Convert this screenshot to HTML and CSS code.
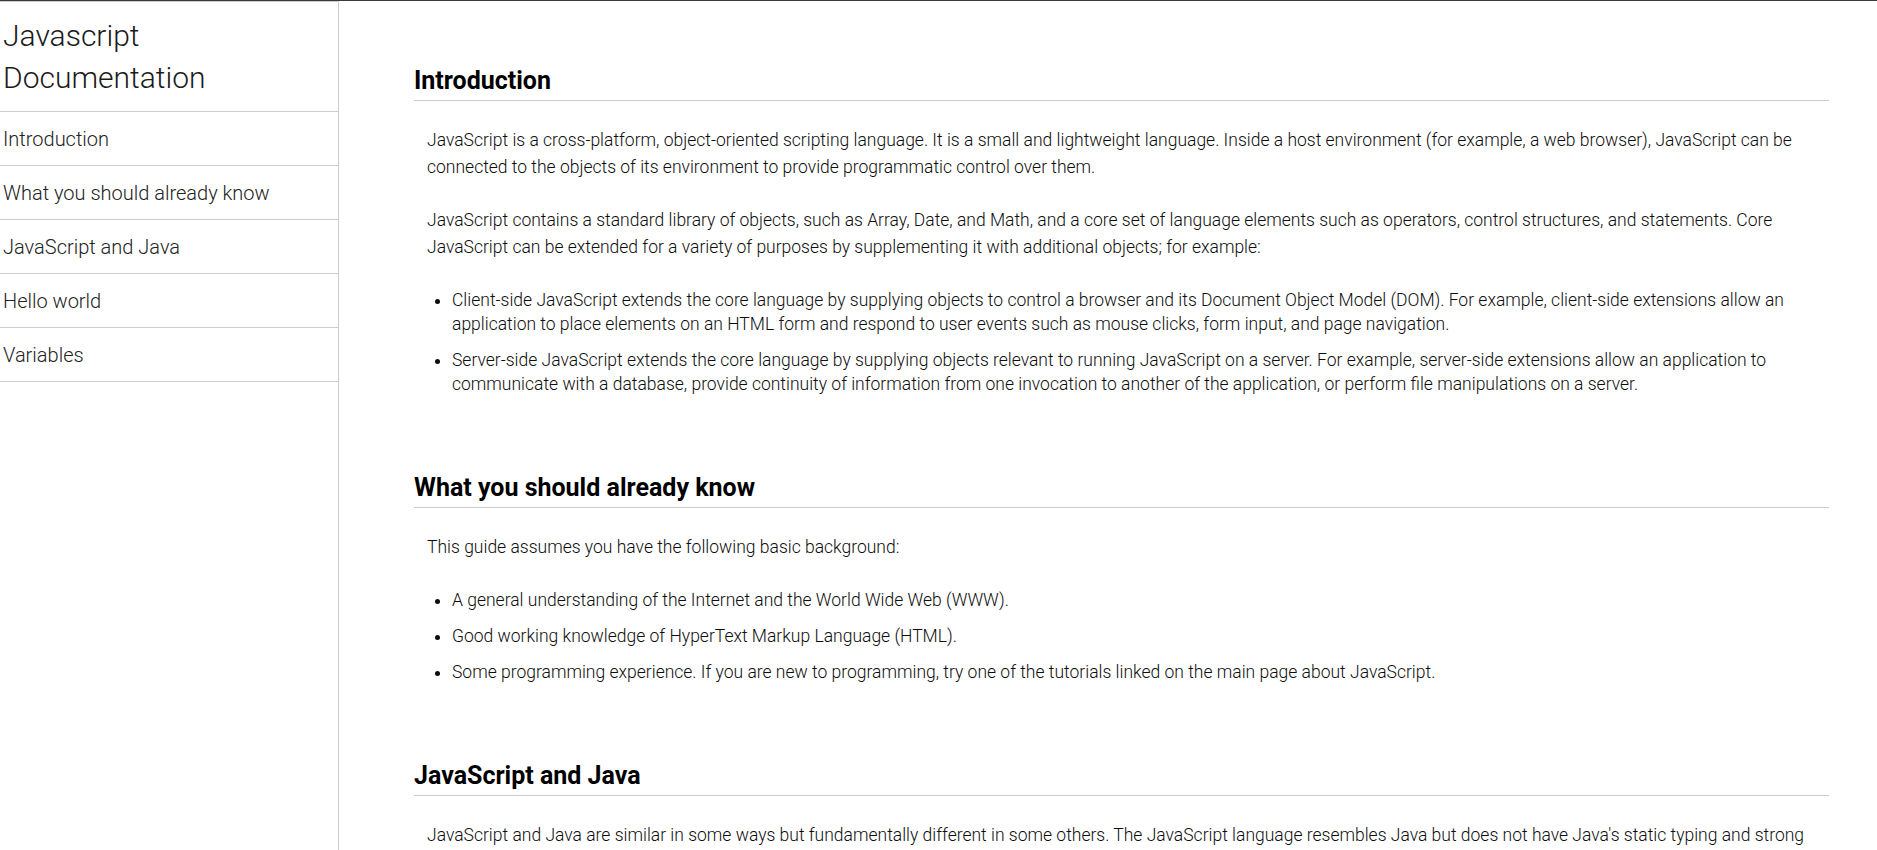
FILE: index.html
```html
<!DOCTYPE html>
<html lang="en">
<head>
<meta charset="utf-8">
<title>Javascript Documentation</title>
<link rel="stylesheet" href="styles.css">
</head>
<body>
<nav class="navbar" id="navbar">
  <header class="nav-title">Javascript Documentation</header>
  <ul class="nav-list">
    <li><a class="nav-link" href="#Introduction">Introduction</a></li>
    <li><a class="nav-link" href="#What_you_should_already_know">What you should already know</a></li>
    <li><a class="nav-link" href="#JavaScript_and_Java">JavaScript and Java</a></li>
    <li><a class="nav-link" href="#Hello_world">Hello world</a></li>
    <li><a class="nav-link" href="#Variables">Variables</a></li>
  </ul>
</nav>
<main class="main-doc" id="main-doc">
  <section class="main-section" id="Introduction">
    <header class="section-title">Introduction</header>
    <p class="text">JavaScript is a cross-platform, object-oriented scripting language. It is a small and lightweight language. Inside a host environment (for example, a web browser), JavaScript can be connected to the objects of its environment to provide programmatic control over them.</p>
    <p class="text">JavaScript contains a standard library of objects, such as Array, Date, and Math, and a core set of language elements such as operators, control structures, and statements. Core JavaScript can be extended for a variety of purposes by supplementing it with additional objects; for example:</p>
    <ul class="list">
      <li>Client-side JavaScript extends the core language by supplying objects to control a browser and its Document Object Model (DOM). For example, client-side extensions allow an application to place elements on an HTML form and respond to user events such as mouse clicks, form input, and page navigation.</li>
      <li>Server-side JavaScript extends the core language by supplying objects relevant to running JavaScript on a server. For example, server-side extensions allow an application to communicate with a database, provide continuity of information from one invocation to another of the application, or perform file manipulations on a server.</li>
    </ul>
  </section>
  <section class="main-section" id="What_you_should_already_know">
    <header class="section-title">What you should already know</header>
    <p class="text">This guide assumes you have the following basic background:</p>
    <ul class="list">
      <li>A general understanding of the Internet and the World Wide Web (WWW).</li>
      <li>Good working knowledge of HyperText Markup Language (HTML).</li>
      <li>Some programming experience. If you are new to programming, try one of the tutorials linked on the main page about JavaScript.</li>
    </ul>
  </section>
  <section class="main-section" id="JavaScript_and_Java">
    <header class="section-title">JavaScript and Java</header>
    <p class="text">JavaScript and Java are similar in some ways but fundamentally different in some others. The JavaScript language resembles Java but does not have Java's static typing and strong type checking. JavaScript follows most Java expression syntax, naming conventions and basic control-flow constructs which was the reason why it was renamed from LiveScript to JavaScript.</p>
    <p class="text">In contrast to Java's compile-time system of classes built by declarations, JavaScript supports a runtime system based on a small number of data types representing numeric, Boolean, and string values.</p>
  </section>
  <section class="main-section" id="Hello_world">
    <header class="section-title">Hello world</header>
    <p class="text">To get started with writing JavaScript, open the Scratchpad and write your first "Hello world" JavaScript code.</p>
  </section>
  <section class="main-section" id="Variables">
    <header class="section-title">Variables</header>
    <p class="text">You use variables as symbolic names for values in your application. The names of variables, called identifiers, conform to certain rules.</p>
  </section>
</main>
</body>
</html>
```

FILE: styles.css
```css
html, body {
  margin: 0;
  padding: 0;
}

body {
  display: flex;
  align-items: stretch;
  border-top: 1px solid #3a3a3a;
  font-family: Roboto, "Liberation Sans", Arial, sans-serif;
  font-weight: 300;
  color: #111;
  background: #fff;
  min-height: 100vh;
  box-sizing: border-box;
}

.navbar {
  flex: 0 0 338px;
  width: 338px;
  border-top: 1px solid #cccccc;
  border-right: 1px solid #cccccc;
}

.nav-title {
  font-size: 30px;
  line-height: 42px;
  padding: 13px 3px 12px;
  border-bottom: 1px solid #cccccc;
  color: #1a1a1a;
}

.nav-list {
  list-style: none;
  margin: 0;
  padding: 0;
}

.nav-list li {
  border-bottom: 1px solid #cccccc;
}

.nav-link {
  display: block;
  padding: 16px 3px 14px;
  font-size: 20px;
  line-height: 23px;
  color: #222;
  text-decoration: none;
}

.main-doc {
  flex: 1;
  min-width: 0;
  padding: 66px 48px 0 75px;
}

.main-section {
  margin-bottom: 78.5px;
}

.section-title {
  font-size: 25px;
  line-height: 28px;
  font-weight: 700;
  color: #000;
  padding-bottom: 5px;
  border-bottom: 1px solid #cccccc;
  margin-bottom: 26px;
}

.text {
  font-size: 17.5px;
  line-height: 27.4px;
  margin: 25px 0;
  padding: 0 13px;
  color: #0d0d0d;
}

.list {
  margin: 26px 0 0;
  padding-left: 38px;
  font-size: 17.5px;
  line-height: 24px;
  color: #0d0d0d;
}

.list li {
  margin-bottom: 12px;
}
```
